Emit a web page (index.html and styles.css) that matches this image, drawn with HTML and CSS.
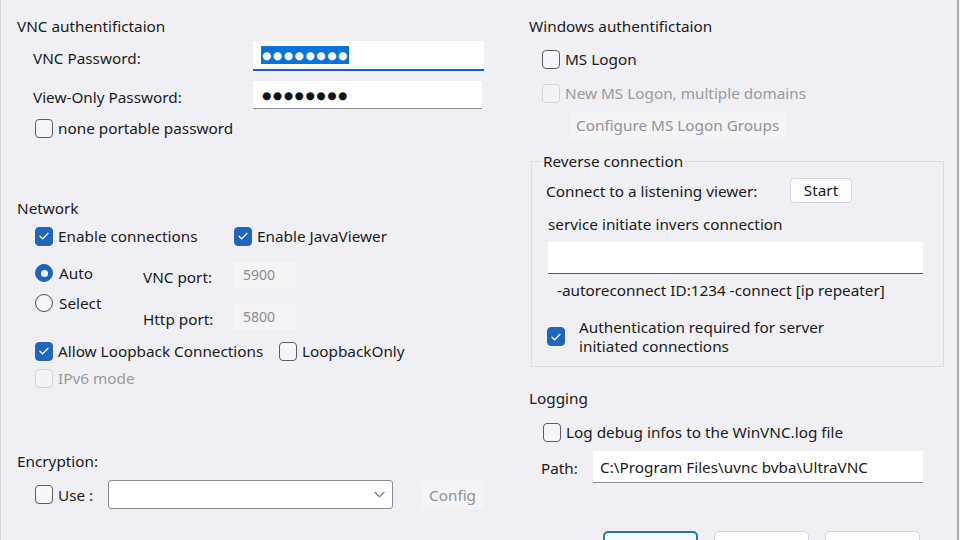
FILE: index.html
```html
<!DOCTYPE html>
<html>
<head>
<meta charset="utf-8">
<title>UltraVNC Server Settings</title>
<link rel="stylesheet" href="styles.css">
</head>
<body>
<div class="dialog">
  <div class="col col-left">
    <div class="heading">VNC authentifictaion</div>
    <div class="pw-row pw-first">
      <span class="pw-lbl">VNC Password:</span>
      <div class="field pw-field focused"><span class="dots sel">●●●●●●●●</span></div>
    </div>
    <div class="pw-row pw-second">
      <span class="pw-lbl">View-Only Password:</span>
      <div class="field pw-field"><span class="dots">●●●●●●●●</span></div>
    </div>
    <label class="check row-np"><span class="box"></span>none portable password</label>

    <div class="heading h-network">Network</div>
    <div class="pair pair-enable">
      <label class="check w-enable"><span class="box on"><svg viewBox="0 0 18 18"><path d="M4.5 9.2l3 3 6-6.2"/></svg></span>Enable connections</label>
      <label class="check"><span class="box on"><svg viewBox="0 0 18 18"><path d="M4.5 9.2l3 3 6-6.2"/></svg></span>Enable JavaViewer</label>
    </div>
    <div class="ports">
      <div class="radios">
        <label class="radio"><span class="dot on"></span>Auto</label>
        <label class="radio"><span class="dot"></span>Select</label>
      </div>
      <div class="port-grid">
        <span class="port-lbl">VNC port:</span><span class="port-field">5900</span>
        <span class="port-lbl">Http port:</span><span class="port-field">5800</span>
      </div>
    </div>
    <div class="pair pair-loop">
      <label class="check w-loop"><span class="box on"><svg viewBox="0 0 18 18"><path d="M4.5 9.2l3 3 6-6.2"/></svg></span>Allow Loopback Connections</label>
      <label class="check"><span class="box"></span>LoopbackOnly</label>
    </div>
    <label class="check disabled row-ipv6"><span class="box"></span>IPv6 mode</label>

    <div class="heading h-enc">Encryption:</div>
    <div class="use-row">
      <label class="check"><span class="box"></span>Use :</label>
      <div class="select"><svg class="chev" viewBox="0 0 12 8"><path d="M1.5 1.8l4.5 4.2 4.5-4.2"/></svg></div>
      <span class="btn-flat">Config</span>
    </div>
  </div>

  <div class="col col-right">
    <div class="heading">Windows authentifictaion</div>
    <label class="check r-ms"><span class="box"></span>MS Logon</label>
    <label class="check disabled r-newms"><span class="box"></span>New MS Logon, multiple domains</label>
    <span class="btn-flat r-config">Configure MS Logon Groups</span>

    <fieldset class="reverse">
      <legend>Reverse connection</legend>
      <div class="connect-row">
        <span class="connect-lbl">Connect to a listening viewer:</span>
        <span class="btn start">Start</span>
      </div>
      <div class="txt service">service initiate invers connection</div>
      <div class="field rev-field"></div>
      <div class="txt hint">-autoreconnect ID:1234 -connect [ip repeater]</div>
      <label class="check auth-row"><span class="box on"><svg viewBox="0 0 18 18"><path d="M4.5 9.2l3 3 6-6.2"/></svg></span><span class="auth-txt">Authentication required for server<br>initiated connections</span></label>
    </fieldset>

    <div class="heading h-log">Logging</div>
    <label class="check r-log"><span class="box"></span>Log debug infos to the WinVNC.log file</label>
    <div class="path-row">
      <span class="path-lbl">Path:</span>
      <div class="field path-field">C:\Program Files\uvnc bvba\UltraVNC</div>
    </div>
    <div class="buttons">
      <span class="btn dlg default">OK</span>
      <span class="btn dlg">Apply</span>
      <span class="btn dlg">Cancel</span>
    </div>
  </div>
</div>
</body>
</html>
```

FILE: styles.css
```css
* { box-sizing: border-box; }

html, body {
  margin: 0;
  padding: 0;
  width: 960px;
  height: 540px;
  overflow: hidden;
  background: #f7f7f9;
}

body {
  font-family: "Noto Sans", "Open Sans", sans-serif;
  font-size: 15.3px;
  color: #1b1b1b;
}

.dialog {
  width: 959px;
  height: 540px;
  display: flex;
  background: #f0eff3;
  border-left: 1px solid #d6d5da;
  border-right: 2px solid #a9a8ad;
  overflow: hidden;
}

.col {
  display: flex;
  flex-direction: column;
  align-items: flex-start;
  padding-top: 16px;
}

.col-left {
  width: 528px;
  padding-left: 16px;
}

.col-right {
  width: 428px;
}

.heading {
  height: 20px;
  line-height: 20px;
  white-space: nowrap;
}

/* checkboxes */
.check {
  display: flex;
  align-items: center;
  height: 20px;
  line-height: 20px;
  white-space: nowrap;
}

.box {
  flex: none;
  width: 18px;
  height: 19px;
  margin-right: 5px;
  border: 1px solid #5d5c62;
  border-radius: 4px;
  background: #f6f6f8;
  display: flex;
  align-items: center;
  justify-content: center;
}

.box.on {
  background: #1f64bd;
  border-color: #1f64bd;
}

.box svg {
  width: 16px;
  height: 16px;
}

.box svg path {
  fill: none;
  stroke: #ffffff;
  stroke-width: 1.5;
  stroke-linecap: round;
  stroke-linejoin: round;
}

.check.disabled {
  color: #9a999e;
}

.check.disabled .box {
  border-color: #d3d2d7;
  background: #f3f3f5;
}

/* radios */
.radio {
  display: flex;
  align-items: center;
  height: 20px;
  line-height: 20px;
}

.dot {
  flex: none;
  width: 18px;
  height: 18px;
  border-radius: 50%;
  border: 1px solid #4f4e54;
  margin-right: 6px;
  background: #f6f6f8;
  display: flex;
  align-items: center;
  justify-content: center;
}

.dot.on {
  background: #1f64bd;
  border-color: #1f64bd;
}

.dot.on::after {
  content: "";
  width: 7px;
  height: 7px;
  border-radius: 50%;
  background: #ffffff;
}

/* fields */
.field {
  background: #ffffff;
  border-bottom: 1px solid #8e8d92;
}

.pw-row {
  display: flex;
  align-items: center;
  margin-left: 16px;
}

.pw-first { margin-top: 5px; height: 30px; }
.pw-second { margin-top: 10px; height: 28px; }

.pw-lbl {
  width: 220px;
  padding-top: 3px;
}

.pw-field {
  width: 231px;
  height: 100%;
  display: flex;
  align-items: center;
  padding-left: 8px;
}

.pw-second .pw-field { width: 229px; }

.pw-field.focused {
  border-bottom: 2px solid #1a5fa8;
}

.dots {
  font-family: "DejaVu Sans", sans-serif;
  font-size: 10.5px;
  letter-spacing: 1.7px;
  line-height: 18px;
  height: 18px;
  padding: 0 0 0 1px;
  color: #111;
}

.dots.sel {
  background: #0a74d6;
  color: #ffffff;
}

.row-np { margin-top: 9px; margin-left: 18px; }

.h-network { margin-top: 60px; }

.pair {
  display: flex;
  margin-left: 18px;
  height: 20px;
}

.pair-enable { margin-top: 8px; }
.w-enable { width: 199px; }

.ports {
  display: flex;
  margin-top: 16px;
  margin-left: 18px;
}

.radios {
  width: 108px;
  padding-top: 1px;
  display: flex;
  flex-direction: column;
  gap: 10px;
}

.port-grid {
  display: grid;
  grid-template-columns: 90px 63px;
  grid-template-rows: 26px 26px;
  row-gap: 16px;
  align-items: center;
}

.port-lbl { padding-top: 3px; }

.port-field {
  height: 26px;
  line-height: 26px;
  padding-left: 10px;
  background: #f4f4f7;
  color: #8b8a8f;
  font-size: 14px;
}

.pair-loop { margin-top: 11px; }
.w-loop { width: 244px; }

.row-ipv6 { margin-top: 7px; margin-left: 18px; }

.h-enc { margin-top: 63px; }

.use-row {
  display: flex;
  align-items: center;
  margin-top: 9px;
  margin-left: 18px;
  height: 29px;
}

.use-row .check { width: 73px; }

.select {
  width: 285px;
  height: 29px;
  background: #ffffff;
  border: 1px solid #8c8b90;
  border-radius: 3px;
  display: flex;
  align-items: center;
  justify-content: flex-end;
  padding-right: 6px;
}

.chev {
  width: 13px;
  height: 9px;
}

.chev path {
  fill: none;
  stroke: #6b6a70;
  stroke-width: 1.2;
}

.btn-flat {
  color: #929197;
  background: #f4f4f6;
  white-space: nowrap;
}

.use-row .btn-flat {
  margin-left: 28px;
  padding: 4px 8px;
}

/* right column */
.r-ms { margin-top: 13px; margin-left: 13px; }
.r-newms { margin-top: 14px; margin-left: 13px; }

.r-config {
  margin-top: 9px;
  margin-left: 41px;
  height: 27px;
  line-height: 27px;
  padding: 0 6px;
  width: 216px;
}

.reverse {
  margin: 12px 0 0 2px;
  width: 413px;
  border: 1px solid #dcdbe0;
  padding: 7px 14px 10px 14px;
  min-width: 0;
}

.reverse legend {
  padding: 0 2px;
  margin-left: -5px;
  line-height: 20px;
  height: 20px;
}

.connect-row {
  display: flex;
  align-items: center;
  height: 25px;
}

.connect-lbl { width: 244px; }

.btn {
  background: #fdfdfd;
  border: 1px solid #d6d5da;
  border-radius: 4px;
  text-align: center;
}

.start {
  width: 62px;
  height: 25px;
  line-height: 22px;
}

.txt {
  height: 20px;
  line-height: 20px;
  white-space: nowrap;
}

.service { margin-top: 11px; padding-left: 2px; }

.rev-field {
  margin-top: 8px;
  margin-left: 2px;
  width: 375px;
  height: 32px;
  border-bottom: 1px solid #5b5a60;
}

.hint { margin-top: 6px; padding-left: 11px; }

.auth-row {
  margin-top: 17px;
  margin-left: 1px;
  height: 39px;
  align-items: center;
}

.auth-row .box { margin-right: 14px; }

.auth-txt {
  line-height: 19px;
  padding-top: 1px;
}

.h-log { margin-top: 21px; }
.r-log { margin-top: 14px; margin-left: 14px; }

.path-row {
  display: flex;
  align-items: center;
  margin-top: 9px;
  margin-left: 12px;
  height: 32px;
}

.path-lbl { width: 52px; padding-top: 2px; }

.path-field {
  width: 330px;
  height: 32px;
  line-height: 32px;
  padding-left: 7px;
  white-space: nowrap;
}

.buttons {
  display: flex;
  gap: 16px;
  margin-top: 48px;
  margin-left: 74px;
}

.dlg {
  width: 95px;
  height: 32px;
  line-height: 30px;
  padding-top: 6px;
  border-radius: 5px;
}

.dlg.default {
  border: 2px solid #2f7897;
  background: #f3fbfd;
}
```
